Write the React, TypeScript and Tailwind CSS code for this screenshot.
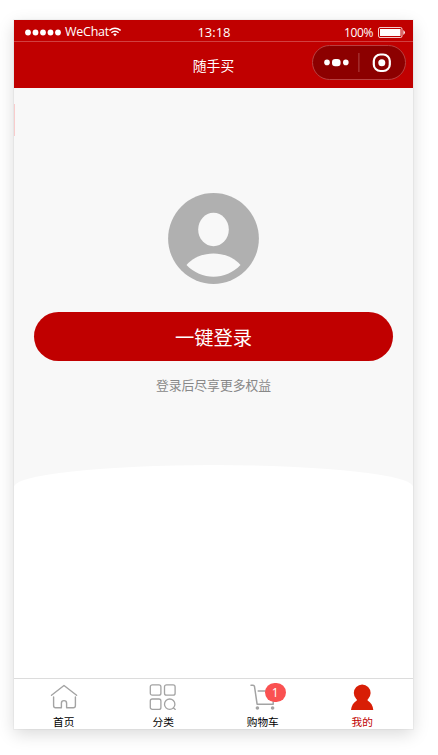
const latin = "font-['Open_Sans','Noto_Sans_CJK_SC',sans-serif]";

const HomeIcon = () => (
  <svg width="28" height="28" viewBox="0 0 28 28" fill="none" stroke="#a3a3a3" strokeWidth="1.4" strokeLinecap="round" strokeLinejoin="round">
    <path d="M1.5 12.2 L14 2.5 L26.6 12.2" />
    <path d="M3.6 14 V22.6 Q3.6 24.8 5.6 24.8 H11.4 V20.2 Q11.4 17.6 14 17.6 Q16.6 17.6 16.6 20.2 V24.8 H23.4 Q25.4 24.8 25.4 22.6 V14" />
  </svg>
);

const CategoryIcon = () => (
  <svg width="28" height="28" viewBox="0 0 28 28" fill="none" stroke="#a3a3a3" strokeWidth="1.3" strokeLinecap="round">
    <rect x="1.3" y="1.8" width="10.6" height="10.4" rx="2" />
    <rect x="15.5" y="1.8" width="10.6" height="10.4" rx="2" />
    <rect x="1.3" y="16" width="10.6" height="10.4" rx="2" />
    <circle cx="20.7" cy="21.2" r="5.2" />
    <path d="M24.5 24.9 L26.3 26.4" />
  </svg>
);

const CartIcon = () => (
  <svg width="28" height="28" viewBox="0 0 28 28" fill="none" stroke="#a3a3a3" strokeWidth="1.5" strokeLinecap="round" strokeLinejoin="round">
    <path d="M2 2.2 H4 Q5.2 2.2 5.5 3.5 L8.1 21.2 H24.2 V16" />
    <path d="M9.2 7.9 H25" />
    <circle cx="8.4" cy="25" r="1.8" fill="#a3a3a3" stroke="none" />
    <circle cx="23.6" cy="25" r="1.8" fill="#a3a3a3" stroke="none" />
  </svg>
);

const UserIcon = () => (
  <svg width="28" height="28" viewBox="0 0 28 28" fill="#d81e06">
    <ellipse cx="14.2" cy="10" rx="8.4" ry="8.6" />
    <path d="M3 27 C3.4 22.6 5.6 19.2 8.8 17.4 L9 15 H19.4 L19.6 17.4 C22.8 19.2 25 22.6 25.3 27 Z" />
  </svg>
);

const tabs = [
  { name: "首页", icon: <HomeIcon /> },
  { name: "分类", icon: <CategoryIcon /> },
  { name: "购物车", icon: <CartIcon />, badge: 1 },
  { name: "我的", icon: <UserIcon />, active: true },
];

const StatusBar = () => (
  <div className="grid h-[22px] grid-cols-3 items-center border-b border-[#d14040] pt-[3px] pr-[7px] pl-[10px] text-[12.5px] leading-none text-white">
    <div className="flex items-center">
      <svg width="38" height="8" viewBox="0 0 38 8" fill="white">
        <circle cx="4" cy="4.5" r="2.9" />
        <circle cx="11.5" cy="4.5" r="2.9" />
        <circle cx="19" cy="4.5" r="2.9" />
        <circle cx="26.5" cy="4.5" r="2.9" />
        <circle cx="34" cy="4.5" r="2.9" />
      </svg>
      <span className="ml-[3px] tracking-[-0.25px]">WeChat</span>
      <svg width="12" height="10" viewBox="0 0 12 10" fill="none" stroke="white" strokeWidth="1.4">
        <path d="M0.4 3.4 Q6 -1 11.6 3.4" />
        <path d="M2.4 5.7 Q6 2.9 9.6 5.7" />
        <path d="M4.2 7.2 Q6 6 7.8 7.2 L6 9.3 Z" fill="white" stroke="none" />
      </svg>
    </div>
    <div className="-ml-[2px] text-center text-[13px]">13:18</div>
    <div className="flex items-center justify-end">
      <span className="mr-[5px] pt-px text-[12px] tracking-[-0.4px]">100%</span>
      <svg width="28" height="11" viewBox="0 0 28 11" fill="none">
        <rect x="0.5" y="0.5" width="23.5" height="10" rx="1.5" stroke="white" strokeOpacity="0.8" />
        <rect x="2" y="2" width="20.5" height="7" fill="white" />
        <path d="M25.4 3 Q28.4 5.5 25.4 8 Z" fill="white" />
      </svg>
    </div>
  </div>
);

const Header = () => (
  <div className="grid h-[46px] grid-cols-[1fr_auto_1fr] items-center text-white">
    <div />
    <h1 className="pt-[2px] text-[13.8px] leading-none">随手买</h1>
    <div className="mr-[7px] -mt-[5px] flex h-[35px] w-[94px] items-center justify-self-end rounded-full border border-[#b84040] bg-[#8c0000]">
      <svg width="92" height="33" viewBox="0 0 92 33" fill="white">
        <circle cx="14" cy="16.4" r="2.8" />
        <rect x="19" y="13" width="8.6" height="7.2" rx="3.2" />
        <circle cx="32.8" cy="16.4" r="2.8" />
        <rect x="45.4" y="7" width="1" height="19" fill="#b04545" />
        <rect x="60.8" y="8.5" width="16" height="16.5" rx="6.6" fill="none" stroke="white" strokeWidth="2.2" />
        <circle cx="68.8" cy="16.8" r="3.5" />
      </svg>
    </div>
  </div>
);

const TabBar = () => (
  <div className="grid h-[51px] shrink-0 grid-cols-4 border-t border-[#dcdcdc] bg-white pr-px">
    {tabs.map((tab) => (
      <div key={tab.name} className={tab.active ? "flex flex-col items-center pt-[4px] text-[#c00000]" : "flex flex-col items-center pt-[4px] text-black"}>
        <div className="relative">
          {tab.icon}
          {tab.badge && (
            <span className="absolute top-0 left-[16px] flex h-[19px] w-[21px] items-center justify-center rounded-full bg-[#fa5151] text-[12px] leading-none text-white">
              {tab.badge}
            </span>
          )}
        </div>
        <span className="mt-[5px] text-[10.7px] leading-[12px]">{tab.name}</span>
      </div>
    ))}
  </div>
);

export default function App() {
  return (
    <div className={`h-[755px] w-[438px] overflow-hidden bg-white pt-5 pl-[14px] ${latin}`}>
      <div className="flex h-[709px] w-[399px] flex-col bg-white shadow-[0_0_0_1px_rgba(0,0,0,0.03),0_5px_16px_rgba(0,0,0,0.15)]">
        <div className="bg-[#c00000]">
          <StatusBar />
          <Header />
        </div>
        <div className="relative flex-1 overflow-hidden bg-white">
          <span className="absolute top-4 left-0 h-8 w-px bg-[#f9cccc]" />
          <div className="flex h-[399px] flex-col items-center bg-[#f8f8f8] pt-[105px]">
            <svg width="91" height="91" viewBox="0 0 91 91">
              <circle cx="45.5" cy="45.5" r="45.4" fill="#b0b0b0" />
              <ellipse cx="45.5" cy="36.5" rx="15.3" ry="16.7" fill="#f8f8f8" />
              <path d="M18.5 72 C32 56.5 59 56.5 72.5 72 C58 87.5 33 87.5 18.5 72 Z" fill="#f8f8f8" />
            </svg>
            <button className="mt-[28px] h-[49px] w-[359px] rounded-full bg-[#c00000] pt-[3px] text-[19.3px] text-white">一键登录</button>
            <p className="mt-[16px] text-[12.8px] leading-[16px] text-[#888]">登录后尽享更多权益</p>
            <div className="mt-auto h-[22px] w-full shrink-0 bg-white [border-radius:50%_50%_0_0/100%_100%_0_0]" />
          </div>
        </div>
        <TabBar />
      </div>
    </div>
  );
}
